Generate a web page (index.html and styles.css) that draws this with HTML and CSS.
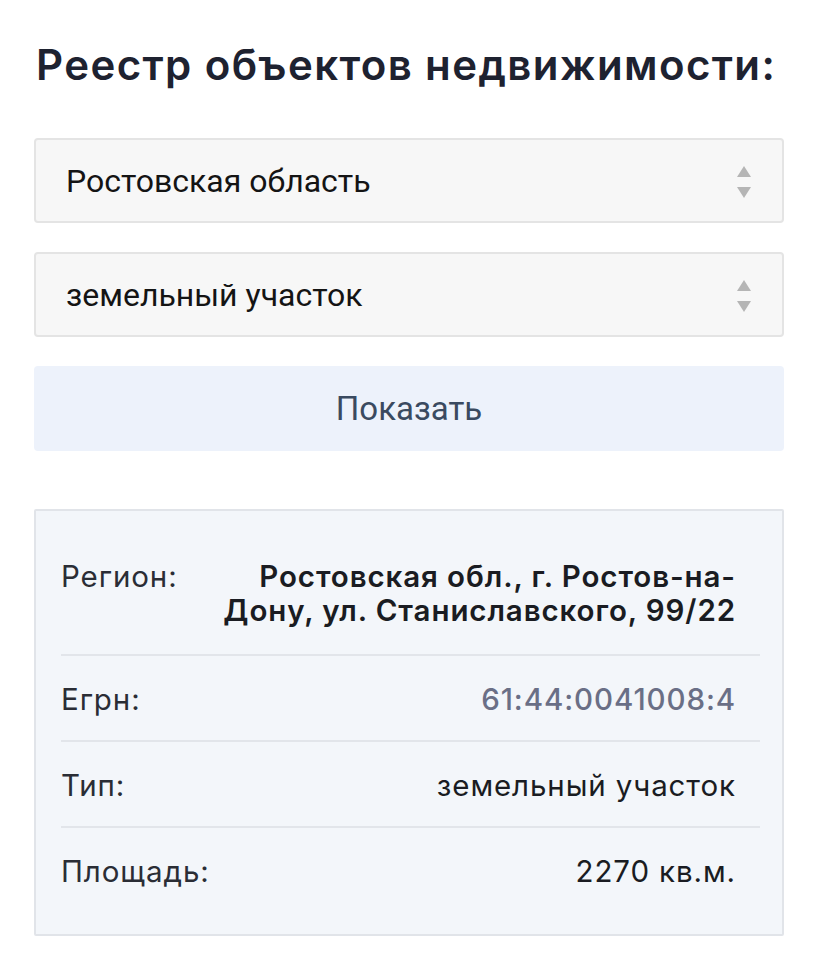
FILE: index.html
```html
<!DOCTYPE html>
<html lang="ru">
<head>
<meta charset="utf-8">
<link rel="stylesheet" href="styles.css">
</head>
<body>
<main class="page">
  <h1 class="title">Реестр объектов недвижимости:</h1>
  <div class="select">
    <span class="select-text">Ростовская область</span>
    <svg class="arrows" width="16" height="34" viewBox="0 0 16 34"><path d="M8 1 L15 12 L1 12 Z" fill="#b5b5b5"/><path d="M1 22 L15 22 L8 33 Z" fill="#b5b5b5"/></svg>
  </div>
  <div class="select">
    <span class="select-text">земельный участок</span>
    <svg class="arrows" width="16" height="34" viewBox="0 0 16 34"><path d="M8 1 L15 12 L1 12 Z" fill="#b5b5b5"/><path d="M1 22 L15 22 L8 33 Z" fill="#b5b5b5"/></svg>
  </div>
  <button class="btn">Показать</button>
  <section class="card">
    <div class="row">
      <span class="label">Регион:</span>
      <span class="value strong">Ростовская обл., г. Ростов-на-<br>Дону, ул. Станиславского, 99/22</span>
    </div>
    <div class="row">
      <span class="label">Егрн:</span>
      <span class="value muted">61:44:0041008:4</span>
    </div>
    <div class="row">
      <span class="label">Тип:</span>
      <span class="value">земельный участок</span>
    </div>
    <div class="row last">
      <span class="label">Площадь:</span>
      <span class="value">2270 кв.м.</span>
    </div>
  </section>
</main>
</body>
</html>
```
FILE: styles.css
```css
* { box-sizing: border-box; }
body {
  margin: 0;
  background: #fff;
  font-family: Inter, "Noto Sans", sans-serif;
  color: #17191f;
}
.page {
  padding: 39px 35px 0 34px;
  display: flex;
  flex-direction: column;
}
.title {
  margin: 0 0 47px 2px;
  font-size: 42px;
  font-weight: 600;
  color: #1e2230;
  line-height: 52px;
  letter-spacing: 1.4px;
}
.select {
  height: 85px;
  background: #f7f7f7;
  border: 2px solid #e4e4e4;
  border-radius: 4px;
  display: flex;
  align-items: center;
  justify-content: space-between;
  padding: 0 30px 0 30px;
  margin-bottom: 29px;
}
.select-text {
  font-family: Roboto, "Noto Sans", sans-serif;
  font-size: 32px;
  color: #141414;
  line-height: 40px;
}
.arrows { display: block; margin-top: 2px; }
.btn {
  height: 85px;
  border: none;
  border-radius: 4px;
  background: #edf2fb;
  color: #3a4a60;
  font-family: Roboto, "Noto Sans", sans-serif;
  font-size: 33px;
  margin: 0 0 58px 0;
  padding: 0;
}
.card {
  background: #f3f6fa;
  border: 2px solid #e1e4e9;
  border-radius: 2px;
  padding: 22px 22px 22px 25px;
}
.row {
  display: flex;
  justify-content: space-between;
  align-items: flex-start;
  gap: 30px;
  padding: 26px 24px 24px 0;
  border-bottom: 2px solid #e2e5ea;
  font-size: 29.5px;
  line-height: 34px;
  letter-spacing: 0.9px;
}
.row:first-child { padding-bottom: 27px; }
.row.last { border-bottom: none; }
.label { color: #2a2d35; white-space: nowrap; }
.value { text-align: right; color: #1a1c22; }
.strong { font-weight: 600; }
.muted { color: #6a6f86; font-weight: 500; }
```
